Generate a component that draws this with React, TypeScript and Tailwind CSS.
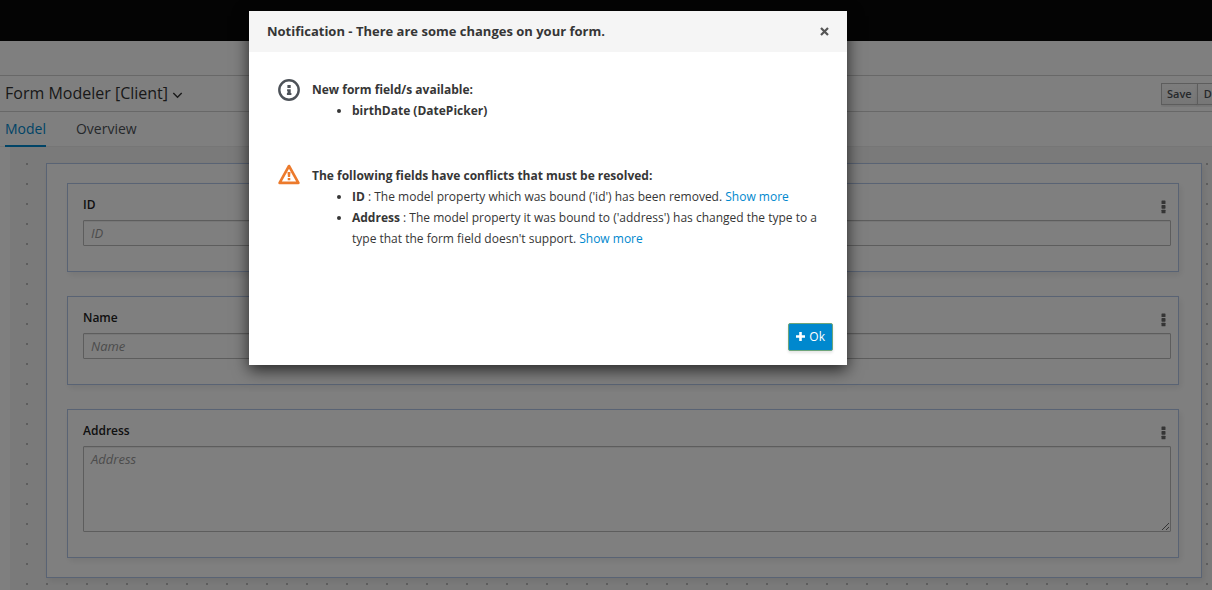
import React from "react";

function Kebab() {
  return (
    <svg width="5" height="14" viewBox="0 0 5 14" fill="#6a6a6a" aria-hidden="true">
      <rect x="0.5" y="0.5" width="4" height="3.6" rx="0.6" />
      <rect x="0.5" y="5.1" width="4" height="3.6" rx="0.6" />
      <rect x="0.5" y="9.7" width="4" height="3.6" rx="0.6" />
    </svg>
  );
}

function FieldCard({ label, multiline = false }: { label: string; multiline?: boolean }) {
  const id = "field-" + label.toLowerCase();
  const box =
    "block w-full rounded-[1px] border border-[#bbb] bg-white px-[7px] text-[13px] leading-5 italic text-[#333] shadow-[inset_0_1px_1px_rgba(3,3,3,0.075)] placeholder:text-[#999] placeholder:opacity-100";
  return (
    <section className="border border-[#b3c6e8] bg-white pt-2.5 pr-[7px] pb-[25px] pl-[15px] shadow-[2px_3px_6px_rgba(3,3,3,0.08)]">
      <div className="flex h-[26px] items-start justify-between">
        <label htmlFor={id} className="text-xs leading-[22px] font-semibold text-[#222]">
          {label}
        </label>
        <button type="button" aria-label="Field options" className="mt-1.5 mr-[5px] flex">
          <Kebab />
        </button>
      </div>
      {multiline ? (
        <textarea id={id} placeholder={label} className={box + " h-[86px] resize-y py-0.5"} />
      ) : (
        <input id={id} type="text" placeholder={label} className={box + " h-[26px] py-0.5"} />
      )}
    </section>
  );
}

function InfoIcon() {
  return (
    <svg className="shrink-0" width="22" height="22" viewBox="0 0 22 22" aria-hidden="true">
      <circle cx="11" cy="11" r="9.7" fill="none" stroke="#4d5258" strokeWidth="2.4" />
      <path d="M9.4 6.1h3.3v3H9.4zM9.1 10.2h3.6v3.8h.7v2H8.9v-2h.6v-1.9h-.4z" fill="#4d5258" />
    </svg>
  );
}

function WarningIcon() {
  return (
    <svg className="mt-[-1px] shrink-0" width="22" height="21" viewBox="0 0 22 21" aria-hidden="true">
      <path d="M11 2 20.4 18.9H1.6Z" fill="none" stroke="#ec7a2c" strokeWidth="2.6" strokeLinejoin="round" />
      <path d="M9.5 8h3l-.4 5H9.9zM9.7 13.9h2.6v2.3H9.7z" fill="#ec7a2c" />
    </svg>
  );
}

function Dialog() {
  return (
    <div
      role="dialog"
      aria-modal="true"
      aria-labelledby="dialog-title"
      className="w-full max-w-[598px] bg-white text-xs text-[#363636] shadow-[0_5px_15px_rgba(0,0,0,0.7)]"
    >
      <header className="flex items-center justify-between bg-[#f5f5f5] px-[18px] py-2.5">
        <h2 id="dialog-title" className="text-[13px] leading-[21px] font-bold">
          Notification - There are some changes on your form.
        </h2>
        <button type="button" aria-label="Close" className="flex size-2.5 items-center justify-center">
          <svg width="9" height="9" viewBox="0 0 9 9" aria-hidden="true">
            <path d="M1 1 8 8M8 1 1 8" stroke="#555" strokeWidth="2.2" />
          </svg>
        </button>
      </header>
      <div className="flex flex-col gap-11 pt-[27px] pr-7 pl-[29px] leading-[21px]">
        <section className="flex items-start gap-3">
          <InfoIcon />
          <div>
            <p className="font-bold">New form field/s available:</p>
            <ul className="list-disc pl-10 font-bold">
              <li>birthDate (DatePicker)</li>
            </ul>
          </div>
        </section>
        <section className="flex items-start gap-3">
          <WarningIcon />
          <div>
            <p className="font-bold">The following fields have conflicts that must be resolved:</p>
            <ul className="list-disc pl-10">
              <li>
                <b className="font-bold">ID</b> : The model property which was bound ('id') has been removed.{" "}
                <a href="#id" className="text-[#0088ce]">Show more</a>
              </li>
              <li>
                <b className="font-bold">Address</b> : The model property it was bound to ('address') has changed the
                type to a type that the form field doesn't support.{" "}
                <a href="#address" className="text-[#0088ce]">Show more</a>
              </li>
            </ul>
          </div>
        </section>
      </div>
      <footer className="flex justify-end px-3.5 pt-[74px] pb-3.5">
        <button
          type="button"
          className="flex h-7 items-center gap-1 rounded-[2px] border border-[#6fa57a] bg-[#0088ce] px-[7px] text-xs leading-5 text-white shadow-[0_2px_3px_rgba(3,3,3,0.1)]"
        >
          <svg className="mb-px" width="9" height="9" viewBox="0 0 9 9" aria-hidden="true">
            <path d="M4.5 0v9M0 4.5h9" stroke="#fff" strokeWidth="2.6" />
          </svg>
          <span>Ok</span>
        </button>
      </footer>
    </div>
  );
}

export default function App() {
  return (
    <div className="relative flex min-h-screen flex-col overflow-hidden bg-white font-['Open_Sans','Noto_Sans',sans-serif] text-[#333]">
      <div className="h-[41px] bg-[#080808]" />
      <div className="h-[35px] border-b border-[#d1d1d1]" />
      <header className="flex h-9 items-center justify-between border-b border-[#d1d1d1] pl-[5px]">
        <h1 className="flex items-center gap-1 pb-0.5 text-base leading-6">
          Form Modeler [Client]
          <svg className="mt-1.5" width="11" height="7" viewBox="0 0 11 7" aria-hidden="true">
            <path d="M1.3 1 5.5 5.3 9.7 1" fill="none" stroke="#333" strokeWidth="1.4" />
          </svg>
        </h1>
        <div className="flex w-[51px] overflow-hidden py-0.5">
          {["Save", "D"].map((text) => (
            <button
              key={text}
              type="button"
              className="-mr-px h-[22px] shrink-0 border border-[#bbb] bg-linear-to-b from-[#fafafa] to-[#ededed] px-[5px] text-[11px] leading-5 font-semibold text-[#4d5258] shadow-[0_2px_3px_rgba(3,3,3,0.1)] last:px-1.5"
            >
              {text}
            </button>
          ))}
        </div>
      </header>
      <nav className="flex h-[35px] gap-[30px] border-b border-[#ededed] px-[5px] text-sm">
        <a href="#model" className="h-[35px] border-b-2 border-[#0088ce] pt-1.5 leading-[22px] text-[#0088ce]">
          Model
        </a>
        <a href="#overview" className="pt-1.5 leading-[22px] text-[#4d5258]">
          Overview
        </a>
      </nav>
      <main className="ml-2.5 grow bg-[#f5f5f5] bg-[conic-gradient(at_2px_2px,transparent_75%,#bbb_0)] bg-size-[20px_20px] bg-position-[16px_16px] pt-4 pr-2.5 pb-3 pl-9">
        <div className="flex flex-col gap-6 border border-[#b3c6e8] bg-white pt-[19px] pr-[22px] pb-[19px] pl-5 shadow-[2px_3px_6px_rgba(3,3,3,0.08)]">
          <FieldCard label="ID" />
          <FieldCard label="Name" />
          <FieldCard label="Address" multiline />
        </div>
      </main>
      <div className="absolute inset-0 flex items-start justify-center bg-black/50 pt-[11px] pr-[116px]">
        <Dialog />
      </div>
    </div>
  );
}
